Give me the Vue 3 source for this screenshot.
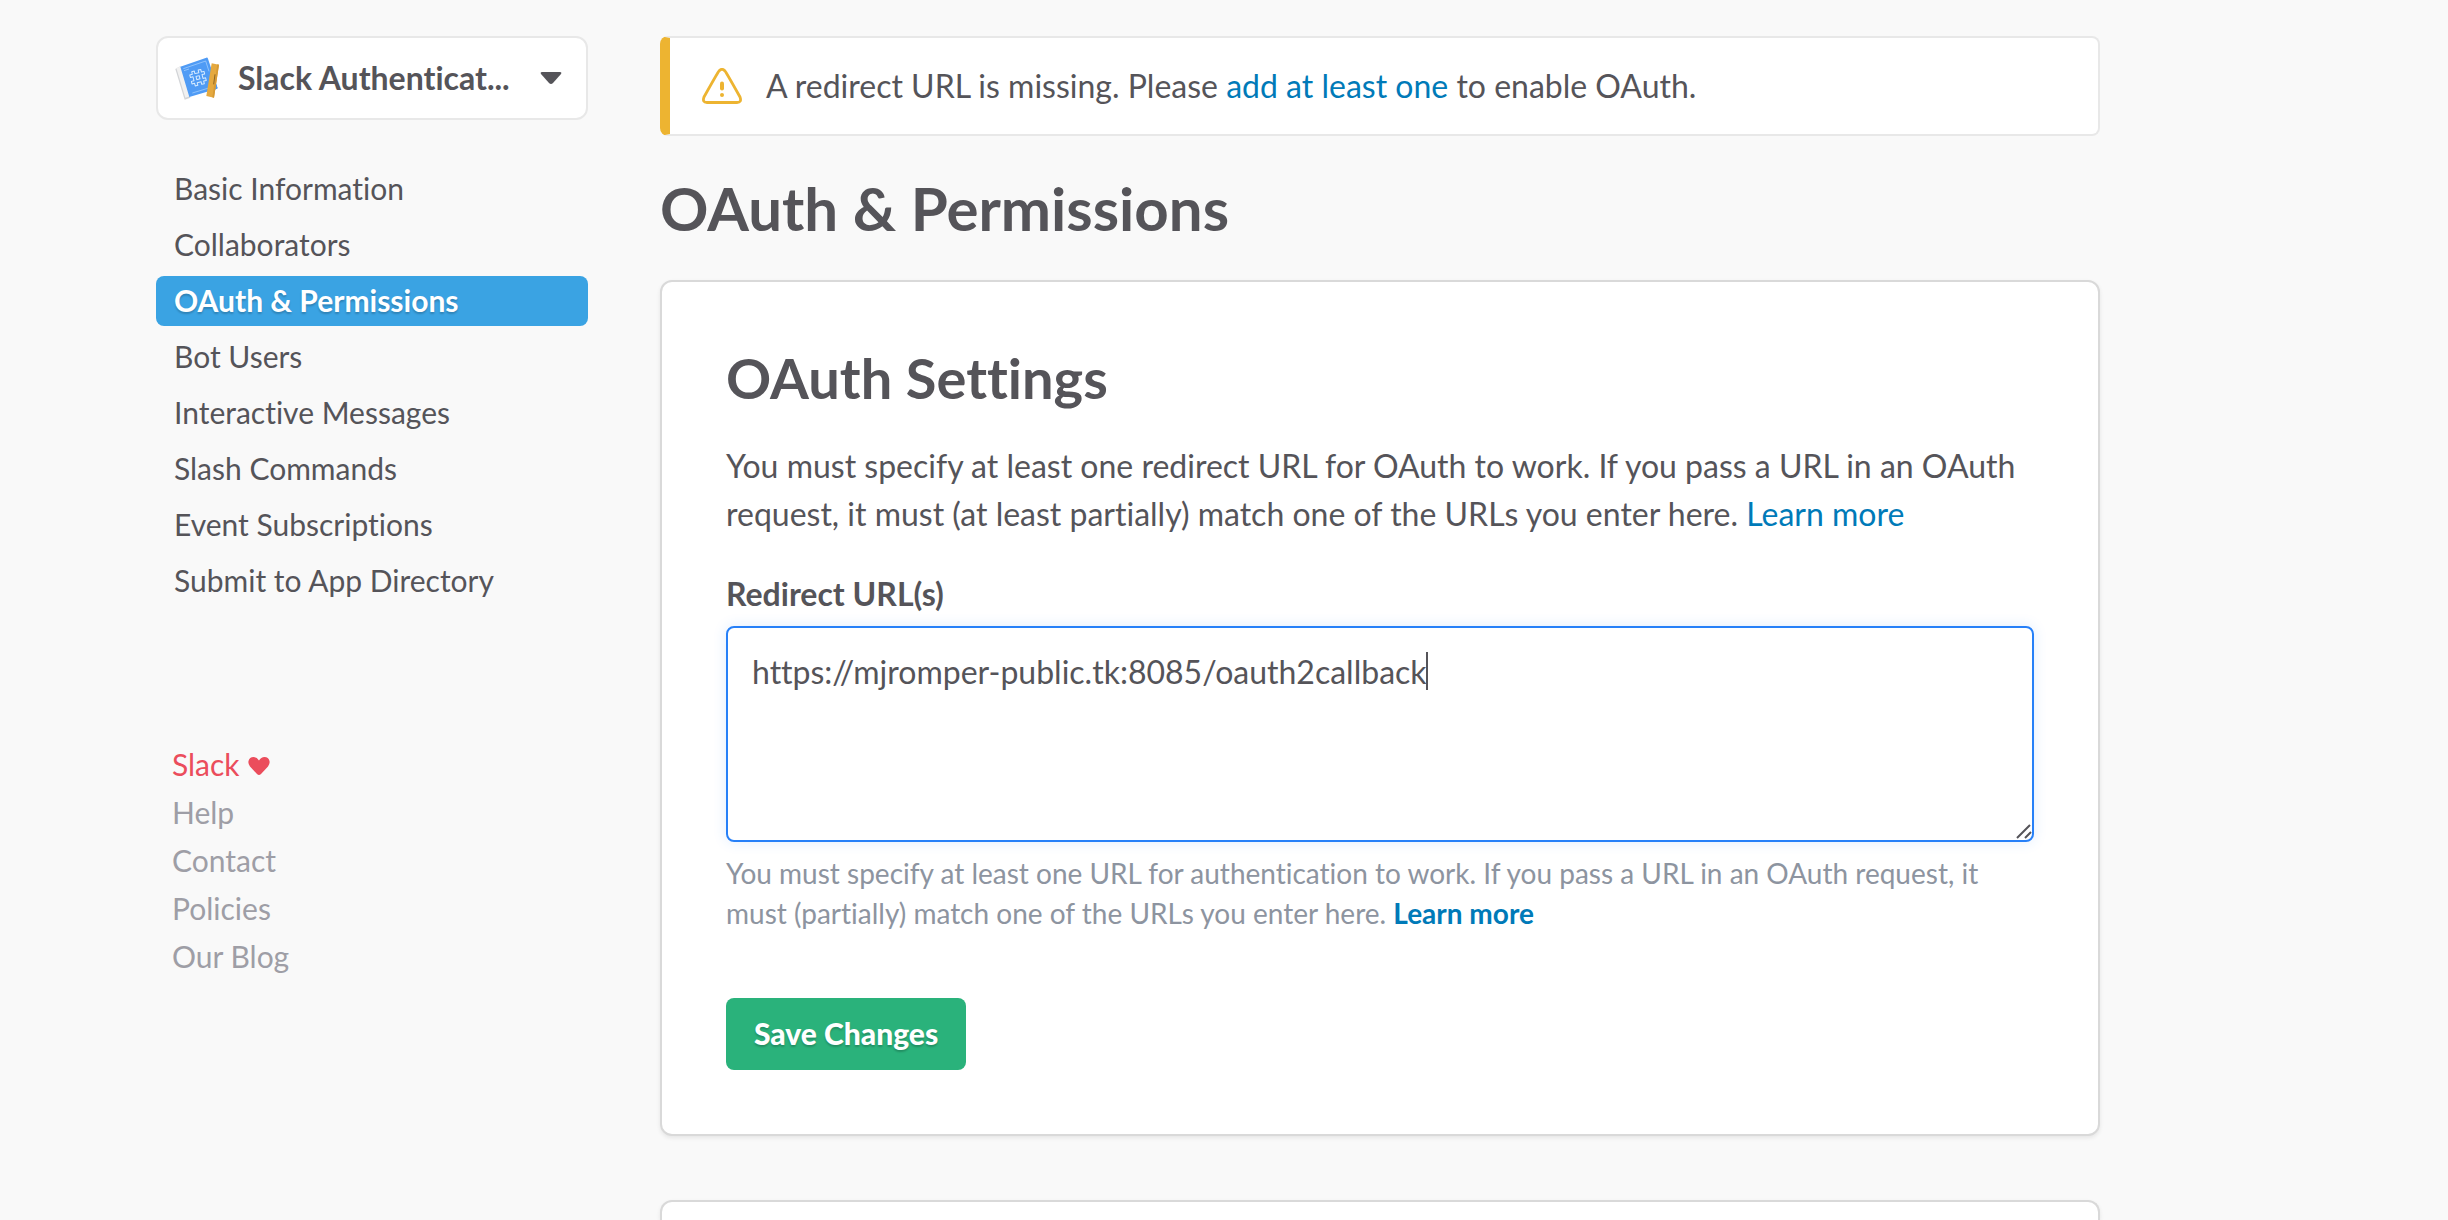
<script setup>
import { ref, nextTick, onMounted } from 'vue'

const appName = 'Slack Authenticat...'
const navItems = [
  { label: 'Basic Information' },
  { label: 'Collaborators' },
  { label: 'OAuth & Permissions', active: true },
  { label: 'Bot Users' },
  { label: 'Interactive Messages' },
  { label: 'Slash Commands' },
  { label: 'Event Subscriptions' },
  { label: 'Submit to App Directory' },
]
const footerLinks = ['Help', 'Contact', 'Policies', 'Our Blog']

const redirectUrls = ref('https://mjromper-public.tk:8085/oauth2callback')
const field = ref(null)
const caretX = ref(0)

// Places the caret after the last character of the field's text.
async function placeCaret() {
  await nextTick()
  const style = getComputedStyle(field.value)
  const ctx = document.createElement('canvas').getContext('2d')
  ctx.font = `${style.fontSize} ${style.fontFamily}`
  const inset = parseFloat(style.paddingLeft) + parseFloat(style.borderLeftWidth)
  caretX.value = Math.ceil(inset + ctx.measureText(redirectUrls.value).width)
}
onMounted(placeCaret)
</script>

<template>
  <div class="page">
    <aside class="sidebar">
      <button class="picker" type="button">
        <svg class="app-icon" viewBox="27 30 138 138" aria-hidden="true">
          <path d="M31 72 L46 64 L76 158 L59 164 Z" fill="#b4b8bd" opacity=".6" />
          <path d="M124 40 L158 130 L146 136 Z" fill="#3f86e0" />
          <path d="M34 69 L48 64 L75 154 L61 158 Z" fill="#f1f1f1" />
          <path d="M46 65 L124 38 Q128 37 129 41 L157 127 Q158 131 154 132 L73 156 Z" fill="#4f9bf5" />
          <g fill="none" stroke="#b9dcff" stroke-width="2.4">
            <path d="M55 71 L122 48 L132 79 M148 124 L82 144" opacity=".75" />
            <path d="M57 77 L72 72" opacity=".75" />
            <g transform="translate(99 98) rotate(-14)" stroke="#d8ecff" stroke-width="3" stroke-linejoin="round">
              <path d="M-14 -22h8v8h12v-8h8v8h8v8h-8v12h8v8h-8v8h-8v-8h-12v8h-8v-8h-8v-8h8v-12h-8v-8h8z" />
              <rect x="-5" y="-5" width="10" height="10" />
            </g>
          </g>
          <path d="M140 55 L162 59 L147 158 L124 153 Z" fill="#e5a93f" />
          <path d="M157 58 L162 59 L147 158 L142 157 Z" fill="#d69a35" />
          <path d="M150 88 L146 118" stroke="#8a6526" stroke-width="3" fill="none" />
        </svg>
        <span class="picker-name">{{ appName }}</span>
        <svg class="chevron" viewBox="0 0 22 14" aria-hidden="true">
          <path d="M2 1h18q2 0 1 2l-8 9q-2 2-4 0L1 3Q0 1 2 1z" fill="#555459" />
        </svg>
      </button>

      <nav class="nav" aria-label="App settings">
        <a v-for="item in navItems" :key="item.label" href="#" :class="['nav-link', { active: item.active }]">{{ item.label }}</a>
      </nav>

      <nav class="footer-nav" aria-label="Slack">
        <a class="footer-link love" href="#">
          Slack
          <svg class="heart" viewBox="0 0 22 20" aria-hidden="true">
            <path d="M11 19 Q10 19 9 18 L2 10.500 Q0 8 0.500 5 Q1.500 1 5.500 1 Q9 1 11 4.500 Q13 1 16.500 1 Q20.500 1 21.500 5 Q22 8 20 10.500 L13 18 Q12 19 11 19 Z" fill="#eb4d5c" />
          </svg>
        </a>
        <a v-for="link in footerLinks" :key="link" class="footer-link" href="#">{{ link }}</a>
      </nav>
    </aside>

    <main class="content">
      <div class="alert" role="alert">
        <svg class="warning" viewBox="0 0 40 36" fill="none" stroke="#edb431" stroke-linecap="round" aria-hidden="true">
          <path d="M17 3 Q20 -0.500 23 3 Q24 4 38 29 Q40 34.500 35 34.500 H5 Q0 34.500 2 29 Q16 4 17 3 Z" stroke-width="2.800" stroke-linejoin="round" />
          <path d="M20 15.500 V20.500" stroke-width="4" />
          <circle cx="20" cy="27" r="2" fill="#edb431" stroke="none" />
        </svg>
        <p>A redirect URL is missing. Please <a href="#">add at least one</a> to enable OAuth.</p>
      </div>

      <h1>OAuth &amp; Permissions</h1>

      <section class="card">
        <h2>OAuth Settings</h2>
        <p class="intro">
          You must specify at least one redirect URL for OAuth to work. If you pass a URL in an OAuth
          request, it must (at least partially) match one of the URLs you enter here.
          <a href="#">Learn more</a>
        </p>
        <form @submit.prevent>
          <label for="redirect-urls">Redirect URL(s)</label>
          <div class="field">
            <textarea id="redirect-urls" ref="field" v-model="redirectUrls" spellcheck="false" aria-describedby="redirect-hint" @input="placeCaret"></textarea>
            <span class="caret" :style="{ left: caretX + 'px' }"></span>
            <svg class="grip" viewBox="0 0 16 16" aria-hidden="true">
              <path d="M1 14 L14 1 M9 14 L15 8" stroke="#555459" stroke-width="2" fill="none" />
            </svg>
          </div>
          <p id="redirect-hint" class="hint">
            You must specify at least one URL for authentication to work. If you pass a URL in an OAuth request, it
            must (partially) match one of the URLs you enter here.
            <a href="#">Learn more</a>
          </p>
          <button class="save" type="submit">Save Changes</button>
        </form>
      </section>

      <section class="card next-card"></section>
    </main>
  </div>
</template>

<style>
body {
  margin: 0;
  background: #f9f9f9;
}
</style>

<style scoped>
.page,
.page * {
  box-sizing: border-box;
}
.page {
  display: grid;
  grid-template-columns: 432px minmax(0, 1440px);
  gap: 72px;
  min-height: 100vh;
  padding: 36px 156px 0;
  color: #555459;
  background: #f9f9f9;
  font-family: Lato, "Noto Sans", sans-serif;
  font-size: 32px;
  font-variant-ligatures: none;
  line-height: 48px;
}
a {
  color: #007ab8;
  text-decoration: none;
}
p {
  margin: 0;
}
button,
textarea {
  font: inherit;
  font-variant-ligatures: none;
  color: inherit;
}

/* Sidebar */
.picker {
  display: flex;
  align-items: center;
  width: 100%;
  height: 84px;
  padding: 0 24px 0 16px;
  background: #fff;
  border: 2px solid #e8e8e8;
  border-radius: 12px;
  font-weight: 700;
  text-align: left;
  cursor: pointer;
}
.app-icon {
  width: 46px;
  height: 46px;
  margin-right: 18px;
}
.picker-name {
  flex: 1;
  white-space: nowrap;
}
.chevron {
  width: 22px;
  height: 14px;
}
.nav {
  display: flex;
  flex-direction: column;
  gap: 6px;
  margin-top: 44px;
  font-size: 30px;
}
.nav-link {
  height: 50px;
  padding: 0 18px;
  border-radius: 8px;
  color: #555459;
  line-height: 48px;
}
.nav-link.active {
  background: #3aa3e3;
  color: #fff;
  font-weight: 700;
  text-shadow: 0 2px 2px rgba(0, 0, 0, 0.2);
}
.footer-nav {
  display: flex;
  flex-direction: column;
  margin-top: 134px;
  padding-left: 16px;
  font-size: 30px;
}
.footer-link {
  color: #9e9ea6;
}
.footer-link.love {
  display: flex;
  align-items: center;
  gap: 8px;
  color: #eb4d5c;
}
.heart {
  width: 22px;
  height: 20px;
  margin-top: 4px;
}

/* Content column */
.content {
  display: flex;
  flex-direction: column;
}
.alert {
  display: flex;
  align-items: center;
  gap: 24px;
  min-height: 100px;
  padding: 0 32px;
  background: #fff;
  border: 2px solid #e8e8e8;
  border-left: 10px solid #edb431;
  border-radius: 8px;
}
.warning {
  flex: none;
  width: 40px;
  height: 36px;
}
h1 {
  margin: 36px 0;
  font-size: 60px;
  font-weight: 700;
  line-height: 72px;
}
.card {
  padding: 64px;
  background: #fff;
  border: 2px solid #d9d9d9;
  border-radius: 12px;
  box-shadow: 0 2px 4px rgba(0, 0, 0, 0.08);
}
h2 {
  margin: 0 0 32px;
  font-size: 56px;
  font-weight: 700;
  line-height: 64px;
}
.intro {
  margin-bottom: 32px;
}
label {
  display: block;
  margin-bottom: 8px;
  font-weight: 700;
}
.field {
  position: relative;
  display: flex;
}
textarea {
  width: 100%;
  height: 216px;
  padding: 20px 24px;
  background: #fff;
  border: 2px solid #2780f8;
  border-radius: 8px;
  box-shadow: 0 0 14px rgba(39, 128, 248, 0.14);
  outline: none;
  resize: none;
  caret-color: transparent;
}
.caret {
  position: absolute;
  top: 26px;
  width: 2px;
  height: 38px;
  background: #555459;
}
.grip {
  position: absolute;
  right: 2px;
  bottom: 2px;
  width: 16px;
  height: 16px;
}
.hint {
  margin: 11px 0 65px;
  color: #8d94a0;
  font-size: 28px;
  line-height: 40px;
}
.hint a {
  font-weight: 700;
}
.save {
  display: block;
  height: 72px;
  padding: 0 28px 2px;
  background: #2ab27b;
  border: 0;
  border-radius: 8px;
  color: #fff;
  font-size: 30px;
  font-weight: 900;
  text-shadow: 0 2px 2px rgba(0, 0, 0, 0.2);
  cursor: pointer;
}
.next-card {
  flex: 1;
  margin-top: 64px;
  padding: 0;
  border-bottom: 0;
  border-radius: 12px 12px 0 0;
}
</style>
